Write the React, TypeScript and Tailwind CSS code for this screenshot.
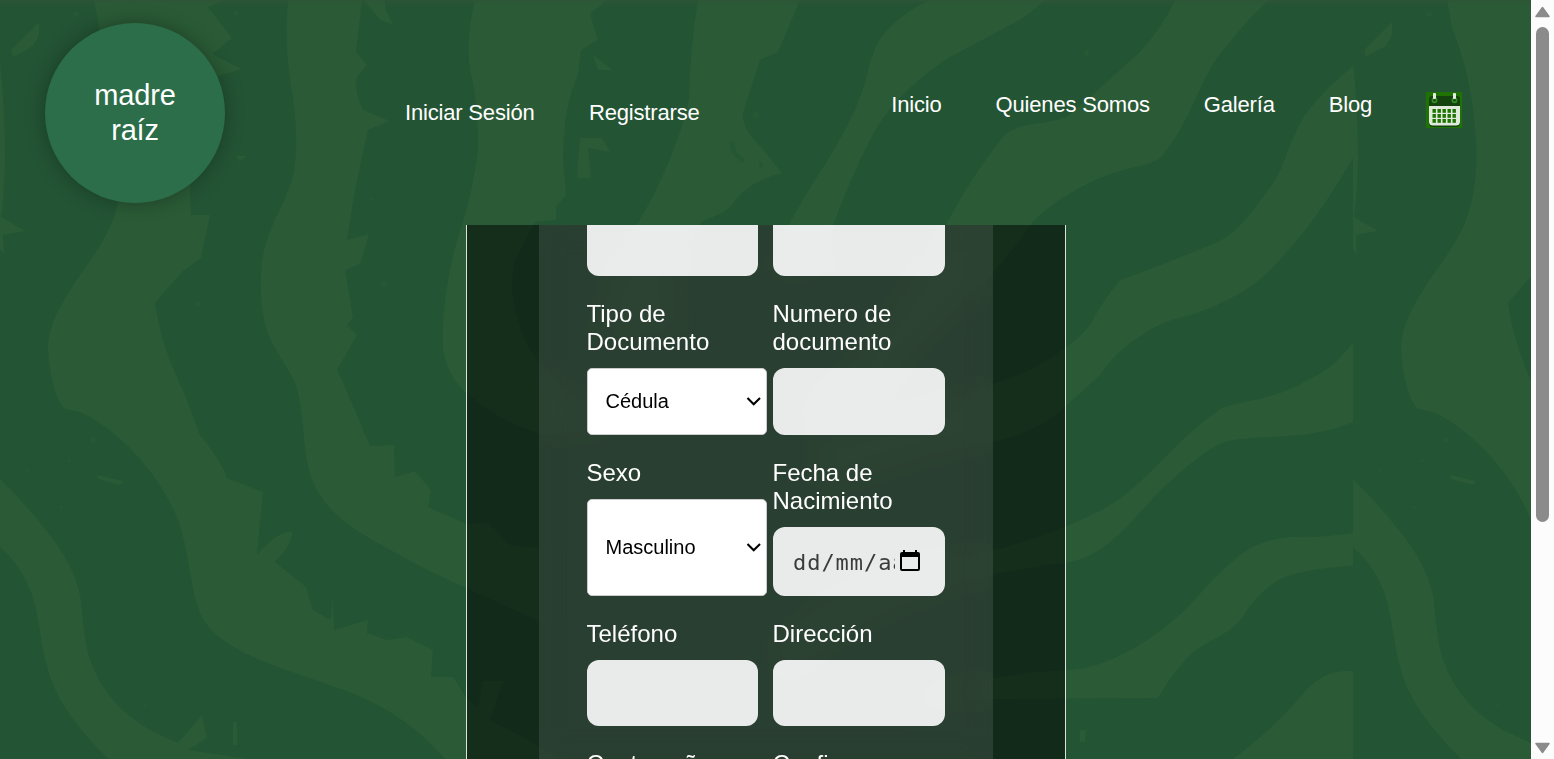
import React from "react";

const font = "font-['Liberation_Sans',Arial,sans-serif]";

function Tile() {
  return (
    <>
      <path d="M0 60Q5 110 5 160Q4 200 1 217L25 231L3 235L4 254L0 250Z" />
      <path d="M39 22L11 50L13 57L33 46L39 35Z" />
      <path d="M94 0L99 28C125 90 128 170 118 203C112 232 92 258 80 275C60 305 48 325 48 350C50 378 56 400 65 409L80 412C120 430 160 475 178 520C192 560 190 600 205 622C225 652 280 668 335 687C390 705 425 735 445 759H560L520 735L490 720L466 697L453 677H431L433 650L407 637L387 640L367 633L368 620L334 630L333 592L331 620L313 610L306 587L275 562C285 552 290 545 293 532Q278 530 257 555L263 492L227 478Q222 462 200 435C192 415 188 400 178 380Q160 340 155 303L182 272L201 258L210 215L191 215L190 187L218 76L242 69L212 54L232 38L208 7L222 0Z" />
      <path d="M288 0Q284 40 290 80Q300 135 294 170C290 195 272 220 264 250C259 275 260 300 265 325C272 348 290 370 296 385C305 420 302 440 308 465C316 505 345 525 385 547Q425 570 466 588L540 622V548L510 545L488 522L466 524L428 507L431 490L415 471L395 477L394 445L370 446L342 380L337 370L357 335L347 325L353 318L345 270L360 264L369 234L347 240L355 190L368 130L390 121L363 110Q354 92 357 77L367 65L356 52L362 0Z" />
      <path d="M364 0L380 20L393 25L385 8V0Z" />
      <path d="M475 0Q465 40 470 70Q478 100 478 150Q473 190 462 225C445 275 442 320 443 350C447 372 458 388 475 400Q505 425 545 435L620 430Q550 380 530 350Q505 300 515 260L535 222L556 220V207L566 195L563 160Q563 120 572 90L578 75L581 50L598 40L590 14L607 0Z" />
      <path d="M593 55L613 70H598Z" />
      <path d="M580 138H602L610 152L588 148L591 178H577Z" />
      <path d="M698 0Q690 50 689 100Q675 160 637 225Q600 300 600 340L680 330Q660 260 704 220Q725 214 733 204Q745 183 782 173L762 148Q742 130 743 113L760 60L778 52L800 0Z" />
      <path d="M930 0C912 8 895 20 882 36Q872 50 867 75Q858 115 815 180Q785 225 770 270H820Q835 210 869 142Q890 98 945 60L1023 18L1046 0Z" />
      <path d="M1175 0Q1162 28 1139 53L1073 112C1055 128 1020 118 1003 137C985 160 970 180 946 225Q890 330 800 420H860Q900 360 960 305Q1000 270 1032 223Q1055 198 1100 178C1135 164 1150 168 1163 155C1195 115 1200 75 1225 48Q1245 22 1269 0Z" />
      <path d="M1353 66Q1318 95 1303 118C1285 150 1285 170 1268 190C1250 215 1235 235 1215 243Q1155 268 1120 280Q1103 300 1090 325Q1075 345 1030 370Q930 410 820 440V490Q930 450 993 442Q1040 432 1067 405L1100 375C1122 342 1160 323 1175 319C1215 310 1250 290 1268 272C1305 235 1325 205 1353 158Z" />
      <path d="M1353 342Q1335 368 1308 380C1270 402 1240 400 1220 409C1175 440 1145 485 1110 505C1080 523 1020 545 993 550Q850 570 780 640V680Q900 580 1066 563C1110 556 1135 515 1165 486C1195 460 1215 440 1240 439C1285 435 1315 438 1353 422Z" />
      <path d="M1353 533Q1320 538 1290 537Q1258 540 1240 555Q1215 575 1190 605C1155 640 1105 670 1066 670Q1000 672 900 700L1158 698C1170 678 1180 665 1190 655C1205 641 1230 635 1242 618Q1260 588 1285 577Q1310 568 1353 566Z" />
      <path d="M1353 671C1330 670 1320 677 1308 688Q1275 728 1233 759H1353Z" />
      <path d="M0 479Q28 507 45 529Q75 565 81 600Q83 625 86 645Q98 700 150 730L178 743L202 715L207 738L188 750L250 759H108C80 730 58 705 48 670C38 635 40 610 28 585Q20 565 0 547Z" />
      <path d="M97 475L123 481L120 485L98 479ZM233 722H237V745H233ZM235 155L247 156L240 161ZM483 681H503L480 750L472 735ZM1080 730H1086L1085 742H1080Z" />
      <g opacity=".6">
        <circle cx="76" cy="14" r="3" /><circle cx="236" cy="13" r="2.5" /><circle cx="198" cy="304" r="3" />
        <circle cx="371" cy="199" r="2" /><circle cx="384" cy="284" r="3" /><circle cx="93" cy="440" r="3" />
        <circle cx="69" cy="461" r="2" /><circle cx="27" cy="470" r="2" /><circle cx="61" cy="507" r="2" />
        <circle cx="145" cy="706" r="2" /><circle cx="756" cy="115" r="3" /><circle cx="1087" cy="53" r="3" />
      </g>
      <path d="M729 141L734 142L737 153L746 160L742 163L731 152ZM759 158L763 166L760 168Z" fill="#265734" />
    </>
  );
}

function Backdrop() {
  return (
    <svg className="absolute inset-0" width="1531" height="759" viewBox="0 0 1531 759" aria-hidden="true">
      <defs>
        <linearGradient id="edge" x1="0" y1="0" x2="0" y2="1">
          <stop offset="0" stopColor="#2f5436" stopOpacity=".8" />
          <stop offset="1" stopColor="#2f5436" stopOpacity="0" />
        </linearGradient>
      </defs>
      <rect width="1531" height="759" fill="#235434" />
      <g fill="#2a5b36">
        <Tile />
        <g transform="translate(1353 0)"><Tile /></g>
      </g>
      <rect width="1531" height="6" fill="url(#edge)" />
    </svg>
  );
}

function CalendarIcon() {
  return (
    <svg width="36" height="36" viewBox="0 0 36 36" className="mt-[15px] block">
      <rect width="36" height="36" fill="#1e7302" />
      <path d="M3 7a3 3 0 0 1 3-3h25a3 3 0 0 1 3 3v24a4 4 0 0 1-4 4H7a4 4 0 0 1-4-4z" fill="#15430f" />
      <path d="M3 14h31v16a4 4 0 0 1-4 3.6H7A4 4 0 0 1 3 30z" fill="#dfe9dc" />
      <g fill="none" stroke="#328f22" strokeWidth="1.7"><circle cx="8.5" cy="8.3" r="2.1" /><circle cx="28.5" cy="8.3" r="2.1" /></g>
      <rect x="7" y="1" width="3" height="6" rx="1" fill="#e6ece2" />
      <rect x="27" y="1" width="3" height="6" rx="1" fill="#e6ece2" />
      <g fill="#1e7302">
        {[17, 22, 27].map((y) => [6, 11, 16, 21, 26].map((x) => <rect key={`${x}-${y}`} x={x + 0.5} y={y} width="3.4" height="3.8" />))}
      </g>
    </svg>
  );
}

function Field({ label, height = "h-[66px]", children }: { label: string; height?: string; children?: React.ReactNode }) {
  return (
    <div className="flex flex-col gap-3">
      <label className="-ml-[0.5px] text-[24px] leading-7 text-white">{label}</label>
      <div className={`w-full rounded-[12px] bg-white/90 ${height}`}>{children}</div>
    </div>
  );
}

function SelectField({ label, value, height }: { label: string; value: string; height: string }) {
  return (
    <div className="flex flex-col gap-3">
      <label className="-ml-[0.5px] text-[24px] leading-7 text-white">{label}</label>
      <div className={`flex w-[180px] items-center justify-between rounded-[5px] border border-[#ccc] bg-white pr-[5px] pb-[2px] pl-[17.5px] text-[20px] text-black ${height}`}>
        <span>{value}</span>
        <svg width="15" height="10" viewBox="0 0 15 10" fill="none" stroke="#000" strokeWidth="2.1"><path d="M1.5 2l6.2 6.2L14 2" /></svg>
      </div>
    </div>
  );
}

function DateField() {
  return (
    <div className="flex h-full items-center pt-[2px] pl-[20px]">
      <span className="w-[102px] overflow-hidden font-['DejaVu_Sans_Mono',monospace] text-[22px] tracking-[0.95px] whitespace-nowrap text-[#3a3b3a]">dd/mm/aaaa</span>
      <svg className="mb-1 ml-[5px] shrink-0" width="20" height="22" viewBox="0 0 20 22">
        <path d="M3 0h2v2h10V0h2v2h1a2 2 0 0 1 2 2v15a2 2 0 0 1-2 2H2a2 2 0 0 1-2-2V4a2 2 0 0 1 2-2h1zM2 7v12h16V7z" fill="#000" fillRule="evenodd" />
      </svg>
    </div>
  );
}

export default function App() {
  return (
    <div className={`flex h-[759px] w-[1554px] overflow-hidden ${font}`}>
      <div className="relative w-[1531px] shrink-0">
        <Backdrop />
        <div className="relative flex h-full flex-col">
          <header className="flex h-[225px] shrink-0 text-[22px] leading-[26px] tracking-[-0.18px] text-white">
            <div className="mt-[23px] ml-[45px] flex h-[180px] w-[180px] items-center justify-center rounded-full bg-[#2c6e49] text-center text-[29px] leading-[35px] shadow-[0_0_20px_rgba(0,0,0,0.3)]">
              madre<br />raíz
            </div>
            <nav className="mt-[100px] ml-[180px] flex gap-[54px]">
              <a className="w-[130px] whitespace-nowrap">Iniciar Sesión</a>
              <a>Registrarse</a>
            </nav>
            <nav className="mt-[77px] mr-[69px] ml-auto flex gap-[54px]">
              <a className="mt-[15px]">Inicio</a>
              <a className="mt-[15px]">Quienes Somos</a>
              <a className="mt-[15px]">Galería</a>
              <a className="mt-[15px]">Blog</a>
              <a><CalendarIcon /></a>
            </nav>
          </header>
          <main className="ml-[466px] flex h-[534px] w-[600px] justify-center overflow-hidden border-x border-[#dde3dc] bg-black/50">
            <form className="flex w-[454px] flex-col bg-white/10 px-12 backdrop-blur-[14px]">
              <div className="grid grid-cols-[171px_172px] gap-x-[15px]">
                <div className="h-[51px] rounded-b-[12px] bg-white/90" />
                <div className="h-[51px] rounded-b-[12px] bg-white/90" />
              </div>
              <div className="mt-6 grid grid-cols-[171px_172px] gap-x-[15px] gap-y-6">
                <SelectField label="Tipo de Documento" value="Cédula" height="h-[67px]" />
                <Field label="Numero de documento" height="h-[67px]" />
                <SelectField label="Sexo" value="Masculino" height="h-[97px]" />
                <Field label="Fecha de Nacimiento" height="h-[69px]"><DateField /></Field>
                <Field label="Teléfono" />
                <Field label="Dirección" />
                <Field label="Contraseña" />
                <Field label="Confirmar" />
              </div>
            </form>
          </main>
        </div>
      </div>
      <div className="flex w-[23px] shrink-0 flex-col items-center bg-[#fcfcfc]">
        <svg className="mt-[6px]" width="15" height="12" viewBox="0 0 15 12"><path d="M7.5 1.5L14 10.5H1z" fill="#8b8b8b" stroke="#8b8b8b" strokeWidth="1.5" strokeLinejoin="round" /></svg>
        <div className="mt-[9px] h-[495px] w-[13px] rounded-full bg-[#8b8b8b]" />
        <svg className="mt-auto mb-[5px]" width="15" height="12" viewBox="0 0 15 12"><path d="M7.5 10.5L14 1.5H1z" fill="#8b8b8b" stroke="#8b8b8b" strokeWidth="1.5" strokeLinejoin="round" /></svg>
      </div>
    </div>
  );
}
